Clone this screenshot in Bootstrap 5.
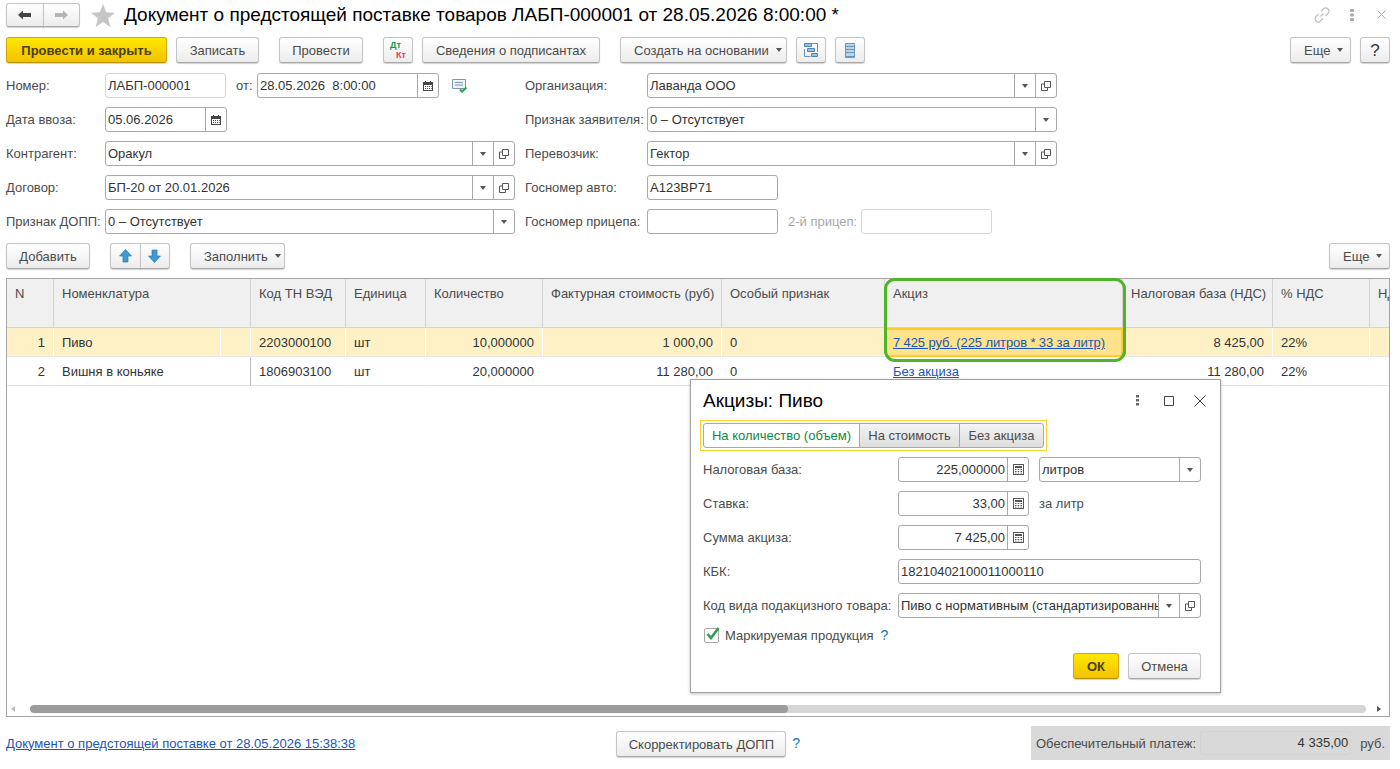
<!DOCTYPE html>
<html lang="ru">
<head>
<meta charset="utf-8">
<title>Документ о предстоящей поставке товаров</title>
<link href="https://cdn.jsdelivr.net/npm/bootstrap@5.3.0/dist/css/bootstrap.min.css" rel="stylesheet">
<style>
html,body{height:100%;}
body{margin:0;overflow:hidden;background:#fff;font-family:"Liberation Sans",Arial,sans-serif;font-size:13px;line-height:15px;color:#4b4b4b;}
#page{position:relative;width:1400px;height:769px;padding:3px 10px 0 6px;}
.hdr{height:24px;}
.star{margin-left:11px;}
.ttl{font-size:19px;line-height:24px;color:#000;margin-left:9px;white-space:nowrap;}
.wctl{gap:20px;margin-right:3px;}
.wx{margin-left:3px;}
.tb{height:26px;margin-top:10px;}
.b1c{height:26px;padding:0;font-size:13px;line-height:15px;color:#4b4b4b;border:1px solid #c4c4c4;border-bottom-color:#a8a8a8;border-radius:3px;background:linear-gradient(#fff,#ececec);box-shadow:0 1px 1px rgba(0,0,0,.18);display:inline-flex;align-items:center;justify-content:center;flex:none;}
.b1c:hover{color:#4b4b4b;border-color:#c4c4c4;}
.b1c.bc{justify-content:flex-start;padding-left:13px;}
.b-y{background:linear-gradient(#ffe700,#f2c200);border-color:#d0a800;border-bottom-color:#b49100;color:#4a3f00;font-weight:700;}
.b-y:hover{color:#4a3f00;border-color:#d0a800;}
.bq{font-size:17px;color:#333;}
.care{display:inline-block;width:0;height:0;border:3.5px solid transparent;border-top:4px solid #555;border-bottom:0;margin-left:7px;}
.w30{width:30px}.w46{width:46px}.w73{width:73px}.w61{width:61px}.w84{width:84px}.w83{width:83px}.w95{width:95px}.w161{width:161px}.w170{width:170px}.w178{width:178px}.w167{width:167px}
.ml9{margin-left:9px}.ml20{margin-left:20px}.mln1{margin-left:-1px}
.navg{width:74px;height:24px;}
.navg .b1c{height:24px;width:37px;}
.navg .b1c+.b1c{margin-left:-1px;}
.upd{width:60px;}
.frm{margin-top:10px;height:161px;}
.fcol{display:flex;flex-direction:column;gap:9px;}
.fc1{width:509px;}
.fc2{margin-left:10px;width:532px;}
.rw{display:flex;align-items:center;height:25px;}
.lb{flex:none;white-space:nowrap;color:#4b4b4b;}
.lb1{width:99px;}.lb2{width:122px;}.lbd{width:195px;}
.fld{display:flex;height:25px;flex:none;border:1px solid #a9a9a9;border-radius:3px;background:#fff;color:#333;overflow:hidden;}
.fld.pale{border-color:#d6d6d6;}
.val{flex:1 1 0;min-width:0;padding:0 2px;line-height:23px;white-space:nowrap;overflow:hidden;color:#333;}
.val.r{text-align:right;}
.fbn{flex:none;width:21px;border-left:1px solid #a9a9a9;display:flex;align-items:center;justify-content:center;}
.fbn .dn{display:block;width:0;height:0;border:3.5px solid transparent;border-top:4px solid #555;border-bottom:0;}
.f410{width:410px}.f121{width:121px}.f182{width:182px}.f122{width:122px}.f131{width:131px}.f303{width:303px}.f162{width:162px}
.ml-ot{margin-left:10px;width:21px;}
.gico{margin-left:13px;}
.lb3{margin-left:10px;color:#a8a8a8;width:73px;}
.tb2{margin-top:9px;}
.gw{margin-top:9px;height:439px;border:1px solid #a6a6a6;display:flex;flex-direction:column;}
.gin{flex:1 1 0;overflow:hidden;}
.gt{table-layout:fixed;width:1463px;border-collapse:separate;border-spacing:0;margin:0;--bs-table-bg:transparent;--bs-table-color:#333;font-size:13px;}
.c47{width:47px}.c167{width:167px}.c30{width:30px}.c95{width:95px}.c80{width:80px}.c117{width:117px}.c179{width:179px}.c163{width:163px}.c238{width:238px}.c150{width:150px}.c97{width:97px}.c100{width:100px}
.gt th,.gt td{padding:0 8px;overflow:hidden;white-space:nowrap;border:0;box-shadow:none;}
.gt thead th{height:49px;vertical-align:top;padding-top:7px;font-weight:400;color:#4b4b4b;background:#f0f0f0;border-right:1px solid #d4d4d4;border-bottom:1px solid #d4d4d4;}
.gt tbody td{height:29px;vertical-align:middle;line-height:15px;color:#333;border-bottom:1px solid #e2e2e2;border-right:1px solid transparent;padding-top:1px;}
.gt tr.sel td{background:#fdf1c5;border-right-color:#fff;border-bottom-color:#e6e6e6;}
.gt td.fz{border-right-color:#bdbdbd!important;}
.gt tr.sel td.fz{border-right-color:#fff!important;}
.gt td.rt{text-align:right;}
.gt tr.sel td.act{background:#ffe28c;border:2px solid #ffcb25;padding-left:6px;padding-top:0;letter-spacing:-.11px;}
.lnk{color:#1a55b8;text-decoration:underline;}
.sbr{flex:none;height:20px;padding:9px 0 3px 4px;display:flex;align-items:center;}
.arl,.arr{flex:none;width:0;height:0;border:3px solid transparent;}
.arl{border-right:4px solid #bbb;border-left:0;}
.arr{border-left:4px solid #555;border-right:0;margin-left:11px;}
.trk{flex:none;width:1336px;height:8px;margin-left:15px;background:#d6d6d6;border-radius:4px;overflow:hidden;}
.thm{height:8px;background:#9c9c9c;border-radius:4px;}
.foot{margin-top:9px;height:34px;}
.fcel{height:34px;}
.flk{white-space:nowrap;}
.fbt{margin-left:261px;margin-top:5px;}
.qm{color:#0f75bd;font-weight:400;}
.fq{margin-left:6px;font-size:14px;}
.pnl{margin-left:auto;width:359px;height:34px;background:#d9d9d9;padding:0 5px;color:#4b4b4b;white-space:nowrap;}
.pnl .pl{flex:1 1 0;min-width:0;}
.pnl .pv{width:151px;height:24px;flex:none;margin-left:6px;border:1px solid #d3d3d3;border-radius:3px;text-align:right;padding-right:2px;line-height:22px;color:#333;}
.pnl .pv+span{margin-left:9px;flex:none;}
.hl{position:absolute;left:884px;top:278px;width:242px;height:84px;border:3px solid #4fb428;border-radius:11px;pointer-events:none;}
.dlg{position:absolute;left:690px;top:379px;width:531px;height:314px;background:#fff;border:1px solid #a3a3a3;box-shadow:0 1px 3px rgba(0,0,0,.25);padding:0 19px 0 12px;}
.dh{height:40px;align-items:center;padding-top:1px;}
.dt{font-size:19px;line-height:24px;color:#000;}
.dctl{margin-left:auto;margin-right:-5px;}
.dsq{margin-left:25px;}
.dxx{margin-left:20px;}
.tum{width:347px;height:31px;margin-left:-3px;border:1px solid #ffcf33;padding:2px;}
.tg{width:341px;height:25px;}
.tg .tgb{height:25px;padding:0;font-size:13px;border:1px solid #a9a9a9;border-radius:0;background:linear-gradient(#f4f4f4,#dedede);color:#4b4b4b;display:flex;align-items:center;justify-content:center;}
.tg .tgb+.tgb{margin-left:-1px;}
.tg .tgb:first-child{border-radius:3px 0 0 3px;width:157px;background:#fff;color:#0a8a43;}
.tg .tgb:nth-child(2){width:101px;}
.tg .tgb:last-child{border-radius:0 3px 3px 0;width:85px;}
.dfs{margin-top:6px;display:flex;flex-direction:column;gap:9px;}
.ms10{margin-left:10px;}
.fl11{margin-left:10px;}
.cbx{margin-top:10px;height:15px;padding-left:1px;}
.ckb{width:15px;height:15px;flex:none;border:1px solid #a9a9a9;border-radius:2px;background:#fff;position:relative;}
.ckb svg{position:absolute;left:0;top:-3px;overflow:visible;}
.cbl{margin-left:6px;}
.cq{margin-left:7px;font-size:14px;}
.dbt{margin-top:10px;gap:9px;}
.dk{font:700 9px "Liberation Sans",sans-serif;fill:#0a9a4b;}
.kt{font:700 9px "Liberation Sans",sans-serif;fill:#e8404a;}
</style>
</head>
<body>
<svg width="0" height="0" class="position-absolute">
<defs>
<symbol id="i-cal" viewBox="0 0 12 12"><path fill="#444" d="M1 2h2V1h1v1h4V1h1v1h2v9H1zM2 5v5h8V5z"/><path fill="#444" d="M3 6h1v1H3zM5 6h1v1H5zM7 6h1v1H7zM9 6h.7v1H9zM3 8h1v1H3zM5 8h1v1H5zM7 8h1v1H7zM9 8h.7v1H9z"/></symbol>
<symbol id="i-clc" viewBox="0 0 11 11"><path fill="#555" d="M0 0h11v11H0zM1 1v9h9V1z"/><path fill="#555" d="M2 2h7v2H2zM2 5h1.500v1H2zM4.700 5h1.500v1H4.700zM7.500 5H9v1H7.500zM2 7h1.500v1H2zM4.700 7h1.500v1H4.700zM7.500 7H9v1H7.500zM2 8.800h1.500v.8H2zM4.700 8.800h1.500v.8H4.700zM7.500 8.800H9v.8H7.500z"/></symbol>
<symbol id="i-opn" viewBox="0 0 10 10"><path fill="none" stroke="#555" d="M3.500.5h6v6h-6zM3.500 3h-3v6.500h6V6.500" /></symbol>
</defs>
</svg>
<div id="page">
  <!-- title row -->
  <div class="d-flex align-items-center hdr">
    <div class="btn-group navg">
      <button class="btn b1c"><svg width="14" height="10" viewBox="0 0 14 10"><path fill="#444" d="M0 5l5-4.500V3h8v4H5v2.500z"/></svg></button>
      <button class="btn b1c"><svg width="14" height="10" viewBox="0 0 14 10"><path fill="#b5b5b5" d="M14 5L9 .5V3H1v4h8v2.500z"/></svg></button>
    </div>
    <svg class="star" width="24" height="23" viewBox="0 0 24 23"><path fill="#c6c6c6" d="M12 0l3.200 8.300 8.800.5-6.900 5.500 2.300 8.600L12 18l-7.400 4.900 2.300-8.600L0 8.800l8.800-.5z"/></svg>
    <div class="ttl">Документ о предстоящей поставке товаров ЛАБП-000001 от 28.05.2026 8:00:00 *</div>
    <div class="d-flex align-items-center ms-auto wctl">
      <svg width="16" height="16" viewBox="0 0 16 16"><path fill="none" stroke="#bcbcbc" stroke-width="1.100" d="M6.500 9.500l3-3M7 4.500l2.500-2.500a2.800 2.800 0 0 1 4.500 4.500L11.500 9M9 11.500L6.500 14A2.800 2.800 0 0 1 2 9.500L4.500 7"/></svg>
      <svg width="4" height="14" viewBox="0 0 4 14"><g fill="#aaa"><rect y="1" width="4" height="3" rx="1"/><rect y="5.500" width="4" height="3" rx="1"/><rect y="10" width="4" height="3" rx="1"/></g></svg>
      <svg class="wx" width="10" height="10" viewBox="0 0 10 10"><path stroke="#aaa" d="M.5.500l8 8M8.500.500l-8 8"/></svg>
    </div>
  </div>
  <!-- toolbar -->
  <div class="d-flex tb">
    <button class="btn b1c b-y w161">Провести и закрыть</button>
    <button class="btn b1c w83 ml9">Записать</button>
    <button class="btn b1c w84 ml20">Провести</button>
    <button class="btn b1c w30 ml20"><svg width="24" height="20" viewBox="0 0 24 20"><text x="4" y="8" class="dk">Дт</text><text x="10" y="18" class="kt">Кт</text></svg></button>
    <button class="btn b1c w178 ml9">Сведения о подписантах</button>
    <button class="btn b1c bc w167 ml20">Создать на основании<span class="care"></span></button>
    <button class="btn b1c w30 ml9"><svg width="16" height="16" viewBox="0 0 16 16"><path fill="none" stroke="#5f93bd" d="M1.500 7v7.500h6M14.500 10V1.500h-6"/><path fill="#9bbfdd" stroke="#4f86b2" d="M1.500 1.500h7v3h-7zM4.500 6.500h7v3h-7zM8.500 11.500h6v3h-6z"/></svg></button>
    <button class="btn b1c w30 ml9"><svg width="10" height="15" viewBox="0 0 10 15"><rect width="10" height="15" rx="1" fill="#6b97bb"/><path fill="#bcd3e5" d="M1 1h8v2H1zM1 4h8v2H1zM1 7h8v2H1zM1 10h8v3H1z"/></svg></button>
    <button class="btn b1c bc w61 ms-auto">Еще<span class="care"></span></button>
    <button class="btn b1c w30 ml9 bq">?</button>
  </div>
  <!-- form -->
  <div class="d-flex frm">
    <div class="fcol fc1">
      <div class="rw"><span class="lb lb1">Номер:</span><div class="fld pale f121"><span class="val">ЛАБП-000001</span></div><span class="lb ml-ot">от:</span><div class="fld f182"><span class="val">28.05.2026&nbsp; 8:00:00</span><span class="fbn"><svg width="12" height="12"><use href="#i-cal"/></svg></span></div><svg class="gico" width="16" height="14" viewBox="0 0 16 14"><path fill="#eef3f7" stroke="#7d97ad" d="M.5.500h13v9h-13z"/><path stroke="#7d97ad" d="M3 3.500h8M3 6h8"/><path fill="none" stroke="#2fa84a" stroke-width="2.200" d="M8 10.500l2 2 4.500-4"/></svg></div>
      <div class="rw"><span class="lb lb1">Дата ввоза:</span><div class="fld f122"><span class="val">05.06.2026</span><span class="fbn"><svg width="12" height="12"><use href="#i-cal"/></svg></span></div></div>
      <div class="rw"><span class="lb lb1">Контрагент:</span><div class="fld f410"><span class="val">Оракул</span><span class="fbn"><span class="dn"></span></span><span class="fbn"><svg width="10" height="10"><use href="#i-opn"/></svg></span></div></div>
      <div class="rw"><span class="lb lb1">Договор:</span><div class="fld f410"><span class="val">БП-20 от 20.01.2026</span><span class="fbn"><span class="dn"></span></span><span class="fbn"><svg width="10" height="10"><use href="#i-opn"/></svg></span></div></div>
      <div class="rw"><span class="lb lb1">Признак ДОПП:</span><div class="fld f410"><span class="val">0 – Отсутствует</span><span class="fbn"><span class="dn"></span></span></div></div>
    </div>
    <div class="fcol fc2">
      <div class="rw"><span class="lb lb2">Организация:</span><div class="fld f410"><span class="val">Лаванда ООО</span><span class="fbn"><span class="dn"></span></span><span class="fbn"><svg width="10" height="10"><use href="#i-opn"/></svg></span></div></div>
      <div class="rw"><span class="lb lb2">Признак заявителя:</span><div class="fld f410"><span class="val">0 – Отсутствует</span><span class="fbn"><span class="dn"></span></span></div></div>
      <div class="rw"><span class="lb lb2">Перевозчик:</span><div class="fld f410"><span class="val">Гектор</span><span class="fbn"><span class="dn"></span></span><span class="fbn"><svg width="10" height="10"><use href="#i-opn"/></svg></span></div></div>
      <div class="rw"><span class="lb lb2">Госномер авто:</span><div class="fld f131"><span class="val">А123ВР71</span></div></div>
      <div class="rw"><span class="lb lb2">Госномер прицепа:</span><div class="fld f131"><span class="val"></span></div><span class="lb lb3">2-й прицеп:</span><div class="fld pale f131"><span class="val"></span></div></div>
    </div>
  </div>
  <!-- table toolbar -->
  <div class="d-flex tb2">
    <button class="btn b1c w84">Добавить</button>
    <div class="btn-group ml20 upd">
      <button class="btn b1c w30"><svg width="13" height="14" viewBox="0 0 13 14"><path fill="#3d9ad6" stroke="#2b7db3" stroke-width=".7" d="M6.500.5L12.500 7H9v6H4V7H.5z"/></svg></button>
      <button class="btn b1c w30 mln1"><svg width="13" height="14" viewBox="0 0 13 14"><path fill="#3d9ad6" stroke="#2b7db3" stroke-width=".7" d="M6.500 13.500L12.500 7H9V1H4v6H.5z"/></svg></button>
    </div>
    <button class="btn b1c bc w95 ml20">Заполнить<span class="care"></span></button>
    <button class="btn b1c bc w61 ms-auto">Еще<span class="care"></span></button>
  </div>
  <!-- grid -->
  <div class="gw">
    <div class="gin">
      <table class="table gt">
        <colgroup><col class="c47"><col class="c167"><col class="c30"><col class="c95"><col class="c80"><col class="c117"><col class="c179"><col class="c163"><col class="c238"><col class="c150"><col class="c97"><col class="c100"></colgroup>
        <thead><tr>
          <th>N</th><th colspan="2">Номенклатура</th><th>Код ТН ВЭД</th><th>Единица</th><th>Количество</th><th>Фактурная стоимость (руб)</th><th>Особый признак</th><th>Акциз</th><th>Налоговая база (НДС)</th><th>% НДС</th><th>НДС</th>
        </tr></thead>
        <tbody>
          <tr class="sel"><td class="rt">1</td><td>Пиво</td><td></td><td>2203000100</td><td>шт</td><td class="rt">10,000000</td><td class="rt">1 000,00</td><td>0</td><td class="act"><a class="lnk" href="#">7 425 руб. (225 литров * 33 за литр)</a></td><td class="rt">8 425,00</td><td>22%</td><td></td></tr>
          <tr><td class="rt">2</td><td colspan="2" class="fz">Вишня в коньяке</td><td>1806903100</td><td>шт</td><td class="rt">20,000000</td><td class="rt">11 280,00</td><td>0</td><td><a class="lnk" href="#">Без акциза</a></td><td class="rt">11 280,00</td><td>22%</td><td></td></tr>
        </tbody>
      </table>
    </div>
    <div class="sbr"><span class="arl"></span><div class="trk"><div class="thm" style="width:56.7%"></div></div><span class="arr"></span></div>
  </div>
  <!-- footer -->
  <div class="d-flex foot">
    <div class="d-flex align-items-center fcel"><a class="lnk flk" href="#">Документ о предстоящей поставке от 28.05.2026 15:38:38</a></div>
    <button class="btn b1c w170 fbt">Скорректировать ДОПП</button>
    <div class="d-flex align-items-center fcel"><span class="qm fq">?</span></div>
    <div class="d-flex align-items-center pnl"><span class="pl">Обеспечительный платеж:</span><span class="pv">4 335,00</span><span>руб.</span></div>
  </div>

  <div class="hl"></div>

  <div class="dlg">
    <div class="d-flex dh">
      <span class="dt">Акцизы: Пиво</span>
      <div class="d-flex align-items-center dctl">
        <svg width="3" height="11" viewBox="0 0 3 11"><g fill="#666"><rect y="0" width="3" height="2.500"/><rect y="4" width="3" height="2.500"/><rect y="8" width="3" height="2.500"/></g></svg>
        <svg class="dsq" width="10" height="10" viewBox="0 0 10 10"><path fill="none" stroke="#444" d="M.5.500h9v9h-9z"/></svg>
        <svg class="dxx" width="12" height="12" viewBox="0 0 12 12"><path stroke="#444" d="M.5.500l11 11M11.500.500l-11 11"/></svg>
      </div>
    </div>
    <div class="tum">
      <div class="d-flex tg"><div class="tgb">На количество (объем)</div><div class="tgb">На стоимость</div><div class="tgb">Без акциза</div></div>
    </div>
    <div class="dfs">
      <div class="rw"><span class="lb lbd">Налоговая база:</span><div class="fld f131"><span class="val r">225,000000</span><span class="fbn"><svg width="11" height="11"><use href="#i-clc"/></svg></span></div><div class="fld f162 fl11"><span class="val">литров</span><span class="fbn"><span class="dn"></span></span></div></div>
      <div class="rw"><span class="lb lbd">Ставка:</span><div class="fld f131"><span class="val r">33,00</span><span class="fbn"><svg width="11" height="11"><use href="#i-clc"/></svg></span></div><span class="lb ms10">за литр</span></div>
      <div class="rw"><span class="lb lbd">Сумма акциза:</span><div class="fld f131"><span class="val r">7 425,00</span><span class="fbn"><svg width="11" height="11"><use href="#i-clc"/></svg></span></div></div>
      <div class="rw"><span class="lb lbd">КБК:</span><div class="fld f303"><span class="val">18210402100011000110</span></div></div>
      <div class="rw"><span class="lb lbd">Код вида подакцизного товара:</span><div class="fld f303"><span class="val">Пиво с нормативным (стандартизированны</span><span class="fbn"><span class="dn"></span></span><span class="fbn"><svg width="10" height="10"><use href="#i-opn"/></svg></span></div></div>
    </div>
    <div class="d-flex align-items-center cbx"><span class="ckb"><svg width="15" height="15" viewBox="0 0 15 15"><path fill="none" stroke="#2e9e4f" stroke-width="2.600" d="M2.500 8l3.500 4 7.500-10"/></svg></span><span class="cbl">Маркируемая продукция</span><span class="qm cq">?</span></div>
    <div class="d-flex justify-content-end dbt"><button class="btn b1c b-y w46">ОК</button><button class="btn b1c w73">Отмена</button></div>
  </div>
</div>
</body>
</html>
